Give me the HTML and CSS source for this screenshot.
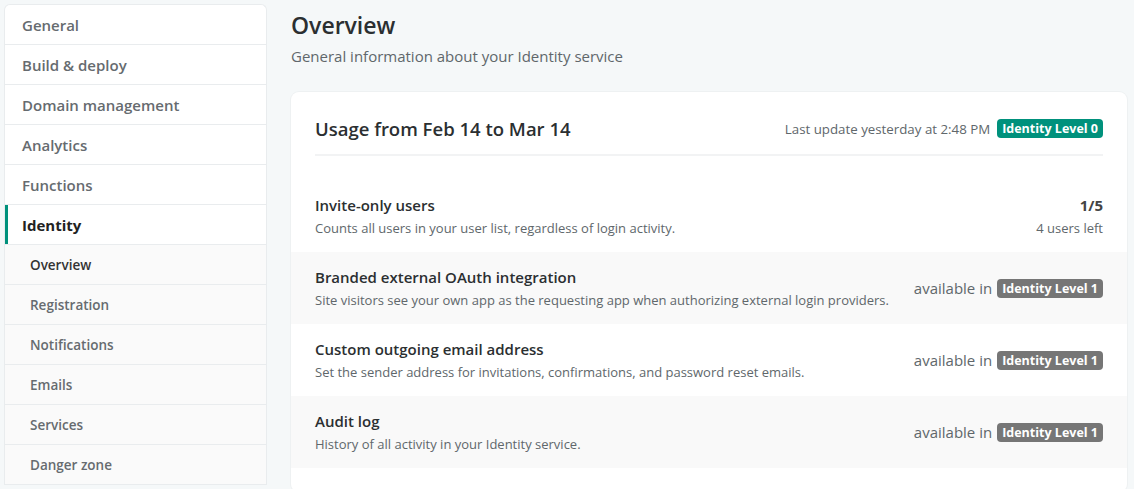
FILE: index.html
```html
<!DOCTYPE html>
<html lang="en">
<head>
<meta charset="utf-8">
<title>Identity overview</title>
<link rel="stylesheet" href="styles.css">
</head>
<body>
<div class="layout">
  <nav class="sidebar">
    <a class="nav-item">General</a>
    <a class="nav-item">Build &amp; deploy</a>
    <a class="nav-item">Domain management</a>
    <a class="nav-item">Analytics</a>
    <a class="nav-item">Functions</a>
    <a class="nav-item active">Identity</a>
    <a class="nav-sub current">Overview</a>
    <a class="nav-sub">Registration</a>
    <a class="nav-sub">Notifications</a>
    <a class="nav-sub">Emails</a>
    <a class="nav-sub">Services</a>
    <a class="nav-sub">Danger zone</a>
  </nav>
  <main class="main">
    <h1 class="title">Overview</h1>
    <p class="subtitle">General information about your Identity service</p>
    <section class="card">
      <header class="card-head">
        <h2 class="card-title">Usage from Feb 14 to Mar 14</h2>
        <div class="updated">Last update yesterday at 2:48 PM <span class="badge teal">Identity Level 0</span></div>
      </header>
      <div class="rows">
        <div class="row">
          <div class="row-text">
            <div class="row-title">Invite-only users</div>
            <div class="row-desc">Counts all users in your user list, regardless of login activity.</div>
          </div>
          <div class="row-side">
            <div class="count">1/5</div>
            <div class="row-desc">4 users left</div>
          </div>
        </div>
        <div class="row alt">
          <div class="row-text">
            <div class="row-title">Branded external OAuth integration</div>
            <div class="row-desc">Site visitors see your own app as the requesting app when authorizing external login providers.</div>
          </div>
          <div class="avail">available in <span class="badge grey">Identity Level 1</span></div>
        </div>
        <div class="row">
          <div class="row-text">
            <div class="row-title">Custom outgoing email address</div>
            <div class="row-desc">Set the sender address for invitations, confirmations, and password reset emails.</div>
          </div>
          <div class="avail">available in <span class="badge grey">Identity Level 1</span></div>
        </div>
        <div class="row alt">
          <div class="row-text">
            <div class="row-title">Audit log</div>
            <div class="row-desc">History of all activity in your Identity service.</div>
          </div>
          <div class="avail">available in <span class="badge grey">Identity Level 1</span></div>
        </div>
      </div>
    </section>
  </main>
</div>
</body>
</html>
```

FILE: styles.css
```css
* { box-sizing: border-box; }
html, body { margin: 0; height: 100%; overflow: hidden; }
body {
  background: #f5f8f9;
  font-family: "Open Sans", "Noto Sans", sans-serif;
  color: #333;
}
.layout {
  display: flex;
  gap: 24px;
  padding: 4px 7px 0 4px;
  align-items: flex-start;
}
.sidebar {
  width: 263px;
  flex: none;
  display: flex;
  flex-direction: column;
  background: #fff;
  border: 1px solid #e9ecee;
  border-bottom: 0;
  border-radius: 6px 6px 0 0;
  overflow: hidden;
}
.nav-item, .nav-sub {
  display: flex;
  align-items: center;
  height: 40px;
  border-bottom: 1px solid #e9ecee;
  color: #666b6f;
  font-weight: 600;
  text-decoration: none;
}
.nav-item {
  padding-left: 17px;
  font-size: 15px;
}
.nav-item.active {
  color: #222;
  font-weight: 700;
  box-shadow: inset 3px 0 0 #00917c;
}
.nav-sub {
  padding-left: 25px;
  font-size: 13.5px;
  background: #fafafa;
}
.nav-sub.current { color: #333; }
.main { flex: 1; min-width: 0; }
.title {
  margin: 6px 0 0;
  font-size: 23px;
  font-weight: 600;
  line-height: 30px;
  color: #2b2f31;
}
.subtitle {
  margin: 5px 0 0;
  font-size: 15px;
  line-height: 22px;
  color: #60676b;
}
.card {
  margin-top: 25px;
  padding-bottom: 24px;
  background: #fff;
  border-radius: 8px;
  box-shadow: 0 0 0 1px #eef1f2;
}
.card-head {
  display: flex;
  align-items: center;
  justify-content: space-between;
  margin: 0 24px;
  padding: 24px 0 13px;
  border-bottom: 2px solid #f2f3f4;
}
.card-title {
  margin: 0;
  font-size: 18.5px;
  font-weight: 600;
  color: #2b2f31;
}
.updated {
  font-size: 13.3px;
  color: #60676b;
  display: flex;
  align-items: center;
  gap: 7px;
}
.badge {
  display: inline-block;
  color: #fff;
  font-weight: 700;
  font-size: 12.5px;
  line-height: 19px;
  padding: 0 5px;
  border-radius: 4px;
}
.badge.teal { background: #00917c; }
.badge.grey { background: #767676; }
.rows { margin-top: 24px; }
.row {
  display: flex;
  justify-content: space-between;
  align-items: center;
  height: 72px;
  padding: 0 24px;
}
.row.alt { background: #f9f9f9; }
.row-title {
  font-size: 15px;
  font-weight: 600;
  color: #2b2f31;
  line-height: 22px;
}
.row-desc {
  font-size: 13px;
  color: #60676b;
  line-height: 20px;
  margin-top: 2px;
}
.row-side { text-align: right; }
.count {
  font-size: 15px;
  font-weight: 700;
  line-height: 22px;
  color: #444;
}
.avail {
  font-size: 15px;
  color: #60676b;
  display: flex;
  align-items: center;
  gap: 5px;
}
```
